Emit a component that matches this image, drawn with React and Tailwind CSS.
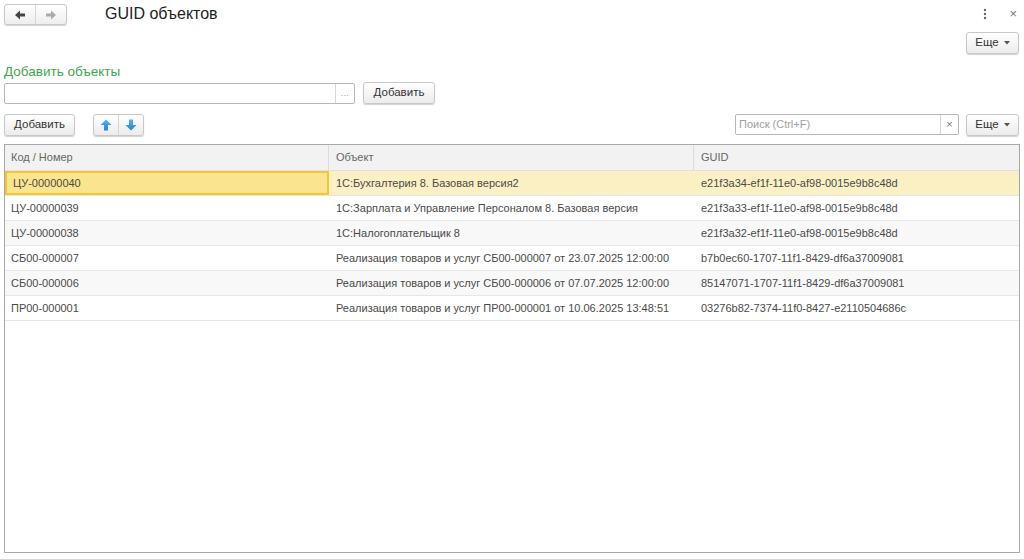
import React from "react";

const rows = [
  ["ЦУ-00000040", "1С:Бухгалтерия 8. Базовая версия2", "e21f3a34-ef1f-11e0-af98-0015e9b8c48d"],
  ["ЦУ-00000039", "1С:Зарплата и Управление Персоналом 8. Базовая версия", "e21f3a33-ef1f-11e0-af98-0015e9b8c48d"],
  ["ЦУ-00000038", "1С:Налогоплательщик 8", "e21f3a32-ef1f-11e0-af98-0015e9b8c48d"],
  ["СБ00-000007", "Реализация товаров и услуг СБ00-000007 от 23.07.2025 12:00:00", "b7b0ec60-1707-11f1-8429-df6a37009081"],
  ["СБ00-000006", "Реализация товаров и услуг СБ00-000006 от 07.07.2025 12:00:00", "85147071-1707-11f1-8429-df6a37009081"],
  ["ПР00-000001", "Реализация товаров и услуг ПР00-000001 от 10.06.2025 13:48:51", "03276b82-7374-11f0-8427-e2110504686c"],
];

const btn =
  "flex items-center justify-center rounded-[3px] border border-[#c8c8c8] bg-gradient-to-b from-white to-[#ececec] shadow-[0_1px_1px_rgba(0,0,0,0.18)] text-[11.5px] text-[#333]";

function Arrow({ dir, color }) {
  const d =
    dir === "left"
      ? "M1 5 L6 0.5 L6 3.5 L11 3.5 L11 6.5 L6 6.5 L6 9.5 Z"
      : "M11 5 L6 0.5 L6 3.5 L1 3.5 L1 6.5 L6 6.5 L6 9.5 Z";
  return (
    <svg width="12" height="10" viewBox="0 0 12 10">
      <path d={d} fill={color} />
    </svg>
  );
}

function VArrow({ dir }) {
  const d =
    dir === "up"
      ? "M6 0.5 L11.5 6 L8 6 L8 11.5 L4 11.5 L4 6 L0.5 6 Z"
      : "M6 11.5 L11.5 6 L8 6 L8 0.5 L4 0.5 L4 6 L0.5 6 Z";
  return (
    <svg width="12" height="12" viewBox="0 0 12 12">
      <defs>
        <linearGradient id={"g" + dir} x1="0" y1="0" x2="0" y2="1">
          <stop offset="0" stopColor="#5bb3ea" />
          <stop offset="1" stopColor="#2684cf" />
        </linearGradient>
      </defs>
      <path d={d} fill={"url(#g" + dir + ")"} />
    </svg>
  );
}

function More() {
  return (
    <div className={btn + " w-[53px] h-[22px] gap-[5px]"}>
      <span>Еще</span>
      <svg width="6" height="4" viewBox="0 0 6 4">
        <path d="M0 0 L6 0 L3 3.5 Z" fill="#555" />
      </svg>
    </div>
  );
}

export default function App() {
  return (
    <div
      className="w-[1024px] h-[559px] bg-white overflow-hidden flex flex-col"
      style={{ fontFamily: '"Liberation Sans", Arial, sans-serif' }}
    >
      {/* title bar */}
      <div className="flex items-center h-[28px] pl-[4px] pr-[6px] pt-[1px]">
        <div className="flex h-[21px] w-[63px] rounded-[3px] border border-[#c8c8c8] bg-gradient-to-b from-white to-[#eeeeee] shadow-[0_1px_1px_rgba(0,0,0,0.18)]">
          <div className="flex-1 flex items-center justify-center border-r border-[#d6d6d6]">
            <Arrow dir="left" color="#444" />
          </div>
          <div className="flex-1 flex items-center justify-center">
            <Arrow dir="right" color="#aaa" />
          </div>
        </div>
        <div className="ml-[38px] text-[16px] text-[#222] leading-none pb-[2px]">GUID объектов</div>
        <div className="flex-1" />
        <svg width="4" height="12" viewBox="0 0 4 12" className="mr-[22px] mb-[1px]">
          <circle cx="2" cy="2" r="1.2" fill="#666" />
          <circle cx="2" cy="6" r="1.2" fill="#666" />
          <circle cx="2" cy="10" r="1.2" fill="#666" />
        </svg>
        <span className="text-[13px] text-[#777] leading-none mr-[1px] mb-[2px]">×</span>
      </div>

      {/* top command bar */}
      <div className="flex justify-end pr-[5px] pt-[4px] h-[30px]">
        <More />
      </div>

      {/* add objects group */}
      <div className="px-[4px] mt-[5px] text-[13.5px] leading-[17px] text-[#3ea650]">Добавить объекты</div>
      <div className="flex items-center px-[4px] mt-[2px] h-[22px]">
        <div className="flex w-[351px] h-[21px] border border-[#b8b8b8] rounded-[2px] bg-white">
          <div className="flex-1" />
          <div className="w-[19px] border-l border-[#d6d6d6] flex items-end justify-center pb-[5px]">
            <span className="text-[8px] leading-none text-[#777] tracking-[0.5px]">...</span>
          </div>
        </div>
        <div className={btn + " ml-[8px] w-[72px] h-[22px]"}>Добавить</div>
      </div>

      {/* table command bar */}
      <div className="flex items-center px-[4px] mt-[9px] h-[23px]">
        <div className={btn + " w-[71px] h-[22px]"}>Добавить</div>
        <div className="ml-[18px] flex h-[22px] w-[51px] rounded-[3px] border border-[#c8c8c8] bg-gradient-to-b from-white to-[#ececec] shadow-[0_1px_1px_rgba(0,0,0,0.18)]">
          <div className="flex-1 flex items-center justify-center border-r border-[#d6d6d6]">
            <VArrow dir="up" />
          </div>
          <div className="flex-1 flex items-center justify-center">
            <VArrow dir="down" />
          </div>
        </div>
        <div className="flex-1" />
        <div className="flex w-[224px] h-[21px] border border-[#b8b8b8] rounded-[2px] bg-white">
          <div className="flex-1 flex items-center pl-[3px] text-[11px] text-[#a0a0a0]">Поиск (Ctrl+F)</div>
          <div className="w-[18px] border-l border-[#d6d6d6] flex items-center justify-center text-[11px] text-[#777] leading-none">×</div>
        </div>
        <div className="ml-[7px] mr-[1px]">
          <More />
        </div>
      </div>

      {/* table */}
      <div className="mx-[4px] mt-[8px] mb-[6px] flex-1 border border-[#a8a8a8] bg-white flex flex-col text-[11px] text-[#4a4a4a] whitespace-nowrap">
        <div className="grid grid-cols-[324px_365px_1fr] h-[26px] bg-[#f2f2f2] border-b border-[#e0e0e0] text-[#666]">
          <div className="flex items-center pl-[6px] border-r border-[#dcdcdc]">Код / Номер</div>
          <div className="flex items-center pl-[7px] border-r border-[#dcdcdc]">Объект</div>
          <div className="flex items-center pl-[7px]">GUID</div>
        </div>
        {rows.map((r, i) => {
          const sel = i === 0;
          const alt = i === 2 || i === 4;
          return (
            <div
              key={r[0]}
              className={
                "grid grid-cols-[324px_365px_1fr] h-[25px] border-b border-[#e6e6e6] " +
                (sel ? "bg-[#fbf0c3]" : alt ? "bg-[#f8f8f8]" : "bg-white")
              }
            >
              <div
                className={
                  "flex items-center pl-[6px] " +
                  (sel ? "bg-[#fbe48f] border-2 border-[#f5c633] pl-[5px]" : "")
                }
              >
                {r[0]}
              </div>
              <div className="flex items-center pl-[7px]">{r[1]}</div>
              <div className="flex items-center pl-[7px]">{r[2]}</div>
            </div>
          );
        })}
      </div>
    </div>
  );
}
